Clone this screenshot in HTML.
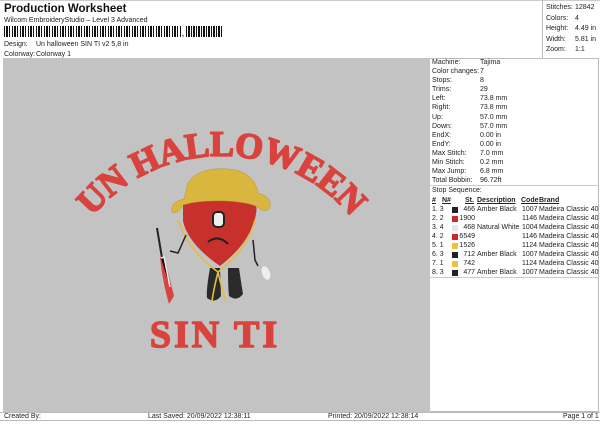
<!DOCTYPE html><html><head><style>
body{margin:0;width:600px;height:424px;background:#fff;position:relative;overflow:hidden;font-family:"Liberation Sans",Arial,sans-serif;color:#222;}
.a{position:absolute;white-space:nowrap;font-size:7px;line-height:9px}
</style></head><body>
<div class="a" style="left:4px;top:2px;font-size:11.5px;line-height:14px;font-weight:bold;color:#111">Production Worksheet</div>
<div class="a" style="left:4px;top:16px">Wilcom EmbroideryStudio – Level 3 Advanced</div>
<div class="a" style="left:4px;top:26px;width:178px;height:11px;background:repeating-linear-gradient(90deg,#111 0 1px,#fff 1px 2px,#111 2px 4px,#fff 4px 5px,#111 5px 6px,#fff 6px 8px)"></div>
<div class="a" style="left:182px;top:30px;font-size:7px;font-weight:bold">,</div>
<div class="a" style="left:186px;top:26px;width:37px;height:11px;background:repeating-linear-gradient(90deg,#111 0 1px,#fff 1px 2px,#111 2px 4px,#fff 4px 5px)"></div>
<div class="a" style="left:4px;top:40px">Design:</div><div class="a" style="left:36px;top:40px">Un halloween SIN TI v2 5,8 in</div>
<div class="a" style="left:4px;top:50px">Colorway:</div><div class="a" style="left:36px;top:50px">Colorway 1</div>
<div class="a" style="left:0;top:0;width:600px;height:1px;background:#ccc"></div>
<div class="a" style="left:3px;top:58px;width:427px;height:354px;background:#c3c3c3"></div>
<div class="a" style="left:542px;top:0;width:57px;height:58px;border-left:1px solid #bbb;border-right:1px solid #bbb"></div>
<div class="a" style="left:430px;top:58px;width:169px;height:354px;border:1px solid #bbb;border-left:none;box-sizing:border-box"></div>
<div class="a" style="left:430px;top:185px;width:169px;height:1px;background:#ccc"></div>
<div class="a" style="left:430px;top:277px;width:169px;height:1px;background:#ccc"></div>
<div class="a" style="left:546px;top:3px;line-height:10.5px">Stitches:<br>Colors:<br>Height:<br>Width:<br>Zoom:</div>
<div class="a" style="left:575px;top:3px;line-height:10.5px">12842<br>4<br>4.49 in<br>5.81 in<br>1:1</div>
<div class="a" style="left:432px;top:58px;line-height:9.1px">Machine:<br>Color changes:<br>Stops:<br>Trims:<br>Left:<br>Right:<br>Up:<br>Down:<br>EndX:<br>EndY:<br>Max Stitch:<br>Min Stitch:<br>Max Jump:<br>Total Bobbin:</div>
<div class="a" style="left:432px;top:186px">Stop Sequence:</div>
<div class="a" style="left:480px;top:58px;line-height:9.1px">Tajima<br>7<br>8<br>29<br>73.8 mm<br>73.8 mm<br>57.0 mm<br>57.0 mm<br>0.00 in<br>0.00 in<br>7.0 mm<br>0.2 mm<br>6.8 mm<br>96.72ft</div>
<div class="a" style="left:432px;top:196px;font-weight:bold;text-decoration:underline">#</div>
<div class="a" style="left:442px;top:196px;font-weight:bold;text-decoration:underline">N#</div>
<div class="a" style="left:465px;top:196px;font-weight:bold;text-decoration:underline">St.</div>
<div class="a" style="left:477px;top:196px;font-weight:bold;text-decoration:underline">Description</div>
<div class="a" style="left:521px;top:196px;font-weight:bold;text-decoration:underline">Code</div>
<div class="a" style="left:539px;top:196px;font-weight:bold;text-decoration:underline">Brand</div>
<div id="rows"></div>
<svg class="a" style="left:0;top:0" width="430" height="412">
<defs><path id="arc" d="M85 226 A168 168 0 0 1 358 226"/></defs>
<text font-family="Liberation Serif,serif" font-weight="bold" font-size="36" fill="#d8443d" stroke="#d8443d" stroke-width="1.6" stroke-linejoin="round" letter-spacing="-0.5"><textPath href="#arc" startOffset="50%" text-anchor="middle">UN HALLOWEEN</textPath></text>
<text x="215" y="347" text-anchor="middle" font-family="Liberation Serif,serif" font-weight="bold" font-size="38" fill="#d8443d" stroke="#d8443d" stroke-width="1.5" stroke-linejoin="round" letter-spacing="3">SIN  TI</text>
<path d="M210 268 q-4 22 -3 30 q8 6 14 -2 l-1 -28z M228 268 q0 20 1 28 q8 6 14 -2 q-2 -12 -4 -26z" fill="#2a2a2a"/>
<path d="M183 205 q0 -8 18 -10 q15 1 20 5 q8 -6 22 -4 q16 3 13 18 q-5 28 -36 52 q-32 -22 -37 -45z" fill="#c8302c"/>
<path d="M172 212 q-2 -10 12 -13 l4 -16 q10 -16 40 -14 q26 2 30 24 q14 4 12 14 q-2 6 -10 2 q-5 -6 -32 -8 q-30 -1 -45 4 q-5 10 -11 7z" fill="#d9b63e" stroke="#b8962e" stroke-width="0.5"/>
<rect x="213" y="212" width="11" height="15" rx="4" fill="#eee" stroke="#222" stroke-width="2"/>
<path d="M208 242 q10 -8 20 2" stroke="#222" stroke-width="2" fill="none"/>
<path d="M178 220 q10 30 40 52 q-5 20 -6 30 M255 220 q-8 30 -37 52 q4 18 8 30" stroke="#e0be40" stroke-width="1.6" fill="none"/>
<path d="M186 235 l-8 18 l-8 -2 M253 240 l2 20 l3 6" stroke="#222" stroke-width="1.5" fill="none"/>
<path d="M157 228 l5 30" stroke="#222" stroke-width="2"/>
<path d="M160 258 l4 -2 l10 40 l-5 8 q-6 -20 -9 -46z" fill="#d8443d"/>
<path d="M161 258 l3 -1 l6 30" stroke="#eee" stroke-width="1.5"/>
<ellipse cx="266" cy="273" rx="4" ry="7" fill="#eee" transform="rotate(-20 266 273)"/>
</svg>
<div class="a" style="left:0;top:412px;width:600px;height:9px;border-top:1px solid #bbb;border-bottom:1px solid #bbb;box-sizing:border-box"></div>
<div class="a" style="left:4px;top:412px">Created By:</div>
<div class="a" style="left:148px;top:412px">Last Saved: 20/09/2022 12:38:11</div>
<div class="a" style="left:328px;top:412px">Printed: 20/09/2022 12:38:14</div>
<div class="a" style="left:563px;top:412px">Page 1 of 1</div>
<script>
var r=[["1.","3","#222","466","Amber Black","1007"],["2.","2","#d02828","1900","","1146"],["3.","4","#e6e6e6","468","Natural White","1004"],["4.","2","#d02828","6549","","1146"],["5.","1","#f2c040","1526","","1124"],["6.","3","#222","712","Amber Black","1007"],["7.","1","#f2c040","742","","1124"],["8.","3","#222","477","Amber Black","1007"]],h="";
r.forEach(function(x,i){var y=205+i*9;
h+='<div class="a" style="left:432px;top:'+y+'px">'+x[0]+' '+x[1]+'</div><div class="a" style="left:452px;top:'+(y+1.5)+'px;width:6px;height:6px;background:'+x[2]+'"></div><div class="a" style="left:458px;top:'+y+'px;width:17px;text-align:right">'+x[3]+'</div><div class="a" style="left:477px;top:'+y+'px">'+x[4]+'</div><div class="a" style="left:522px;top:'+y+'px">'+x[5]+'</div><div class="a" style="left:539px;top:'+y+'px">Madeira Classic 40</div>';});
document.getElementById('rows').innerHTML=h;
</script>
</body></html>
